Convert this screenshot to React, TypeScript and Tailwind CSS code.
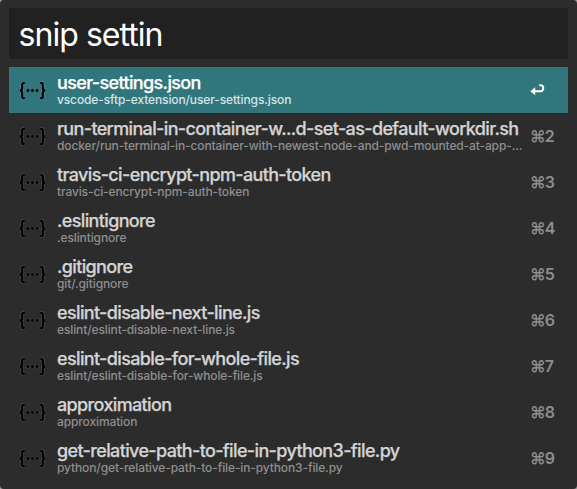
type Snippet = {
  title: string;
  path: string;
};

const snippets: Snippet[] = [
  { title: 'user-settings.json', path: 'vscode-sftp-extension/user-settings.json' },
  {
    title: 'run-terminal-in-container-w...d-set-as-default-workdir.sh',
    path: 'docker/run-terminal-in-container-with-newest-node-and-pwd-mounted-at-app-...',
  },
  { title: 'travis-ci-encrypt-npm-auth-token', path: 'travis-ci-encrypt-npm-auth-token' },
  { title: '.eslintignore', path: '.eslintignore' },
  { title: '.gitignore', path: 'git/.gitignore' },
  { title: 'eslint-disable-next-line.js', path: 'eslint/eslint-disable-next-line.js' },
  { title: 'eslint-disable-for-whole-file.js', path: 'eslint/eslint-disable-for-whole-file.js' },
  { title: 'approximation', path: 'approximation' },
  { title: 'get-relative-path-to-file-in-python3-file.py', path: 'python/get-relative-path-to-file-in-python3-file.py' },
];

function SnippetIcon({ selected }: { selected: boolean }) {
  const halo = selected ? '#5b9196' : '#505050';
  const braces = 'M5.8 1.8H5C3.8 1.8 3.2 2.4 3.2 3.6V7C3.2 8.4 2.6 9.2 1 9.5C2.6 9.8 3.2 10.6 3.2 12V15.4C3.2 16.6 3.8 17.2 5 17.2H5.8M21.2 1.8H22C23.2 1.8 23.8 2.4 23.8 3.6V7C23.8 8.4 24.4 9.2 26 9.5C24.4 9.8 23.8 10.6 23.8 12V15.4C23.8 16.6 23.2 17.2 22 17.2H21.2';
  return (
    <svg width="28" height="19" viewBox="0 0 28 19" fill="none" className="shrink-0">
      <path d={braces} stroke={halo} strokeWidth="3.4" />
      <path d={braces} stroke="#000" strokeWidth="2.2" />
      {[9, 13.5, 18].map((x) => (
        <circle key={x} cx={x} cy="9.5" r="1.9" fill="#000" stroke={halo} strokeWidth="0.6" />
      ))}
    </svg>
  );
}

function ReturnIcon() {
  return (
    <svg width="15" height="12" viewBox="0 0 15 12" fill="none">
      <path d="M9.3 1.2H10.4C12.2 1.2 13.3 2.4 13.3 4C13.3 5.8 12.2 7.3 10.4 7.3H3" stroke="#fff" strokeWidth="1.9" />
      <path d="M0.3 7.3L5.2 3.3V11.3Z" fill="#fff" />
    </svg>
  );
}

export default function App() {
  return (
    <div className="h-[489px] w-[577px] overflow-hidden bg-[#999]">
      <main className="h-full rounded-[4px] bg-[#2c2c2c] px-[9px] pt-2 font-['Inter',sans-serif]">
        <div className="flex h-[51px] items-center bg-[#212121] pt-[2px] pl-[9.5px] text-[32px] leading-none whitespace-pre text-white">
          <span className="tracking-[-0.95px]">snip settin</span>
        </div>
        <ul className="mt-2">
          {snippets.map((s, i) => {
            const selected = i === 0;
            return (
              <li key={s.title} className={`flex h-[46px] items-center pl-[10px] ${selected ? 'bg-[#32767d]' : ''}`}>
                <SnippetIcon selected={selected} />
                <div className="ml-[10px] w-[469px] shrink-0 whitespace-nowrap">
                  <div className={`text-[18px] leading-[20px] font-medium tracking-[-0.64px] [-webkit-text-stroke:0.25px] ${selected ? 'text-white' : 'text-[#d4d4d4]'}`}>
                    {s.title}
                  </div>
                  <div className={`text-[12px] leading-[14px] font-medium tracking-[-0.12px] ${selected ? 'text-[#d5e5e6]' : 'text-[#8f8f8f]'}`}>
                    {s.path}
                  </div>
                </div>
                <div className="ml-[4px] text-[16px] font-semibold tracking-[-0.9px] text-[#8d8d8d]">{selected ? <ReturnIcon /> : `⌘${i + 1}`}</div>
              </li>
            );
          })}
        </ul>
      </main>
    </div>
  );
}
